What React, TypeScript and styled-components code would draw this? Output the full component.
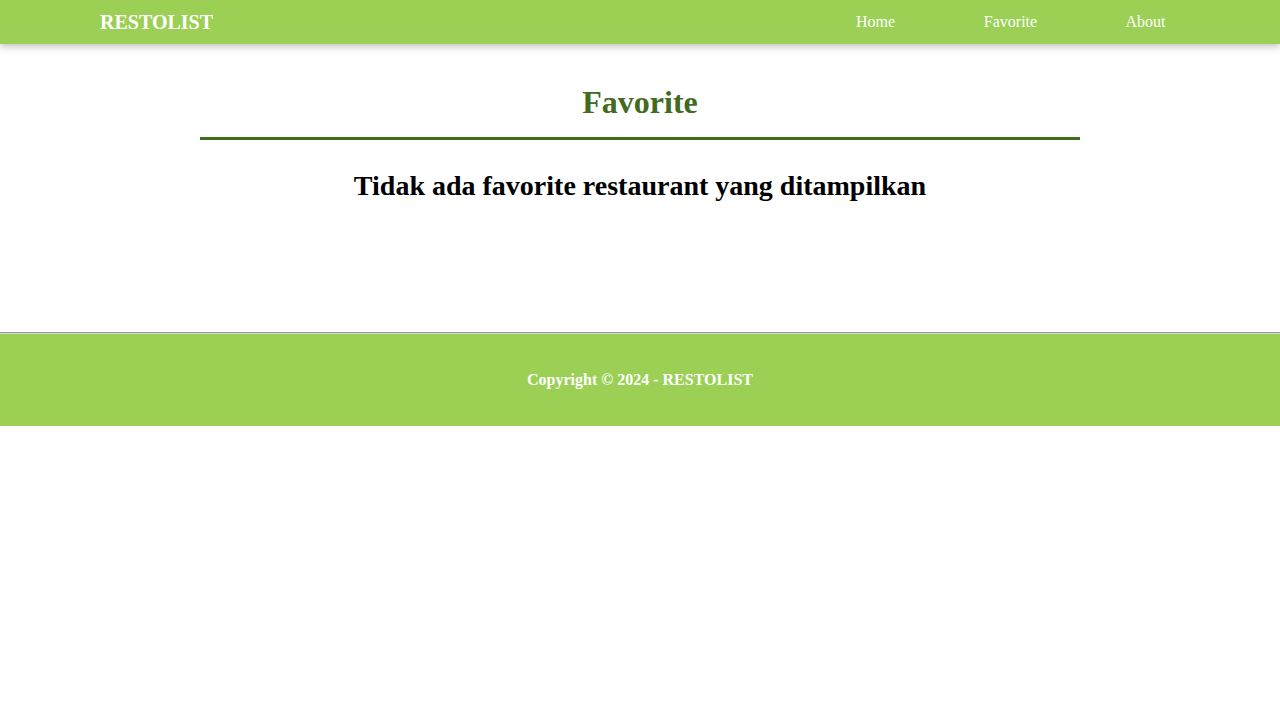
import React from "react";
import styled, { createGlobalStyle } from "styled-components";

const GlobalStyle = createGlobalStyle`
  html, body {
    margin: 0;
    padding: 0;
    background: #ffffff;
    font-family: "Liberation Serif", "Times New Roman", serif;
  }
  * { box-sizing: border-box; }
`;

const Header = styled.header`
  height: 44px;
  display: flex;
  align-items: center;
  justify-content: space-between;
  padding: 0 67px 0 100px;
  background: #9bd055;
  box-shadow: 0 2px 8px rgba(0, 0, 0, 0.28);
  position: relative;
  z-index: 1;
`;

const Logo = styled.a`
  color: #ffffff;
  font-size: 20px;
  font-weight: bold;
  text-decoration: none;
`;

const NavList = styled.nav`
  display: flex;
`;

const NavLink = styled.a`
  width: 135px;
  text-align: center;
  color: #ffffff;
  font-size: 16px;
  text-decoration: none;
`;

const Main = styled.main`
  padding: 40px 0 130px;
`;

const Title = styled.h1`
  width: 880px;
  margin: 0 auto;
  padding-bottom: 16px;
  border-bottom: 3px solid #426b1f;
  color: #426b1f;
  font-size: 32px;
  font-weight: bold;
  text-align: center;
`;

const EmptyMessage = styled.h2`
  margin: 30px 0 0;
  color: #000000;
  font-size: 28px;
  font-weight: bold;
  text-align: center;
`;

const Divider = styled.hr`
  margin: 0;
  border: 0;
  border-top: 1px solid #9a9a9a;
  border-bottom: 1px solid #d6d6d6;
`;

const Footer = styled.footer`
  background: #9bd055;
  padding: 37px 0;
  text-align: center;
`;

const FooterText = styled.p`
  margin: 0;
  color: #ffffff;
  font-size: 16px;
  line-height: 18px;
  font-weight: bold;
`;

export default function App() {
  return (
    <>
      <GlobalStyle />
      <Header>
        <Logo href="#">RESTOLIST</Logo>
        <NavList>
          <NavLink href="#">Home</NavLink>
          <NavLink href="#">Favorite</NavLink>
          <NavLink href="#">About</NavLink>
        </NavList>
      </Header>
      <Main>
        <Title>Favorite</Title>
        <EmptyMessage>Tidak ada favorite restaurant yang ditampilkan</EmptyMessage>
      </Main>
      <Divider />
      <Footer>
        <FooterText>Copyright © 2024 - RESTOLIST</FooterText>
      </Footer>
    </>
  );
}
